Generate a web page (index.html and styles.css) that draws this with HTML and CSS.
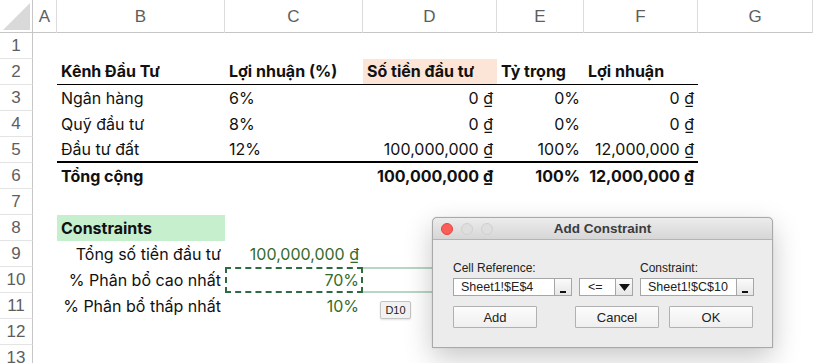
FILE: index.html
```html
<!DOCTYPE html>
<html lang="vi">
<head>
  <meta charset="UTF-8" />
  <title>Add Constraint</title>
  <link rel="stylesheet" href="styles.css">
</head>
<body>
  <div class="sheet">
    <div class="row head">
      <div class="corner">
        <svg width="33" height="33" viewBox="0 0 33 33"><polygon points="3,30 30,30 30,3" fill="#d9d9d9"/></svg>
      </div>
      <div class="col">A</div>
      <div class="col">B</div>
      <div class="col">C</div>
      <div class="col">D</div>
      <div class="col">E</div>
      <div class="col">F</div>
      <div class="col">G</div>
    </div>

    <div class="row"><div class="rn">1</div></div>

    <div class="row">
      <div class="rn">2</div><div></div>
      <div class="c b line">Kênh Đầu Tư</div>
      <div class="c b line">Lợi nhuận (%)</div>
      <div class="c b line peach">Số tiền đầu tư</div>
      <div class="c b line">Tỷ trọng</div>
      <div class="c b line">Lợi nhuận</div>
    </div>

    <div class="row">
      <div class="rn">3</div><div></div>
      <div class="c">Ngân hàng</div>
      <div class="c">6%</div>
      <div class="c r">0 ₫</div>
      <div class="c r">0%</div>
      <div class="c r">0 ₫</div>
    </div>

    <div class="row">
      <div class="rn">4</div><div></div>
      <div class="c">Quỹ đầu tư</div>
      <div class="c">8%</div>
      <div class="c r">0 ₫</div>
      <div class="c r">0%</div>
      <div class="c r">0 ₫</div>
    </div>

    <div class="row">
      <div class="rn">5</div><div></div>
      <div class="c thick">Đầu tư đất</div>
      <div class="c thick">12%</div>
      <div class="c r thick">100,000,000 ₫</div>
      <div class="c r thick">100%</div>
      <div class="c r thick">12,000,000 ₫</div>
    </div>

    <div class="row">
      <div class="rn">6</div><div></div>
      <div class="c b">Tổng cộng</div>
      <div class="c"></div>
      <div class="c b r">100,000,000 ₫</div>
      <div class="c b r">100%</div>
      <div class="c b r">12,000,000 ₫</div>
    </div>

    <div class="row"><div class="rn">7</div></div>

    <div class="row">
      <div class="rn">8</div><div></div>
      <div class="c b green-bg">Constraints</div>
    </div>

    <div class="row">
      <div class="rn">9</div><div></div>
      <div class="c r">Tổng số tiền đầu tư</div>
      <div class="c r val">100,000,000 ₫</div>
    </div>

    <div class="row">
      <div class="rn">10</div><div></div>
      <div class="c r">% Phân bổ cao nhất</div>
      <div class="c r val marching">70%</div>
      <div class="c picked"></div>
    </div>

    <div class="row">
      <div class="rn">11</div><div></div>
      <div class="c r">% Phân bổ thấp nhất</div>
      <div class="c r val">10%</div>
    </div>

    <div class="row"><div class="rn">12</div></div>
    <div class="row"><div class="rn">13</div></div>
  </div>

  <div class="tip">D10</div>

  <div class="dialog">
    <div class="titlebar">
      <div class="lights">
        <span class="light red"></span>
        <span class="light"></span>
        <span class="light"></span>
      </div>
      <div class="title">Add Constraint</div>
    </div>
    <div class="dlg-body">
      <div class="fields">
        <label>Cell Reference:</label>
        <span></span>
        <label>Constraint:</label>

        <div class="field">
          <span class="field-text">Sheet1!$E$4</span>
          <span class="pick"><i></i></span>
        </div>
        <div class="field select">
          <span class="field-text">&lt;=</span>
          <span class="arrow"><svg width="11" height="7" viewBox="0 0 11 7"><polygon points="0,0 11,0 5.5,7" fill="#111"/></svg></span>
        </div>
        <div class="field">
          <span class="field-text">Sheet1!$C$10</span>
          <span class="pick"><i></i></span>
        </div>
      </div>
      <div class="buttons">
        <button>Add</button>
        <button class="push">Cancel</button>
        <button>OK</button>
      </div>
    </div>
  </div>
</body>
</html>
```

FILE: styles.css
```css
* { box-sizing: border-box; }
body {
  margin: 0;
  background: #fff;
  color: #111;
  font-family: Inter, 'Noto Sans', sans-serif;
  font-size: 16px;
  overflow: hidden;
}
.sheet {
  width: 813px;
}
.row {
  display: grid;
  grid-template-columns: 33px 24px 168px 138px 134px 87px 114px 1fr;
  height: 26px;
}
.row.head {
  height: 33px;
  border-bottom: 1px solid #c6c6c6;
}
.corner {
  border-right: 1px solid #c6c6c6;
}
.corner svg { display: block; }
.col {
  display: flex;
  align-items: center;
  justify-content: center;
  border-right: 1px solid #dcdcdc;
  color: #5e5e5e;
  font-family: 'Liberation Sans', Arial, sans-serif;
  font-size: 17px;
}
.rn {
  display: flex;
  align-items: center;
  justify-content: center;
  border-right: 1px solid #c6c6c6;
  border-bottom: 1px solid #e4e4e4;
  color: #5e5e5e;
  font-family: 'Liberation Sans', Arial, sans-serif;
  font-size: 17px;
}
.c {
  padding: 0 4px 0 4px;
  line-height: 26px;
  white-space: nowrap;
  overflow: visible;
}
.c.b { font-weight: 700; }
.c.r { text-align: right; }
.line { border-bottom: 1px solid #000; line-height: 25px; }
.thick { border-bottom: 2px solid #000; line-height: 24px; }
.peach { background: #fce4d6; }
.green-bg { background: #c6efce; }
.val { color: #356b2a; }
.marching {
  border: 2px dashed #2e6b40;
  line-height: 22px;
  padding-right: 2px;
}
.picked {
  border-top: 2px solid #b9d5c5;
  border-bottom: 2px solid #b9d5c5;
}
.tip {
  position: absolute;
  left: 380px;
  top: 301px;
  width: 31px;
  height: 18px;
  background: #f2f2f2;
  border: 1px solid #c4c4c4;
  border-radius: 2px;
  box-shadow: 0 1px 2px rgba(0,0,0,0.12);
  font-family: 'Liberation Sans', Arial, sans-serif;
  font-size: 11px;
  line-height: 16px;
  text-align: center;
  color: #222;
}

/* dialog */
.dialog {
  position: absolute;
  left: 432px;
  top: 217px;
  width: 341px;
  height: 131px;
  background: #ececec;
  border: 1px solid #a9a9a9;
  border-radius: 5px 5px 0 0;
  box-shadow: 0 10px 28px rgba(0,0,0,0.22), 0 0 1px rgba(0,0,0,0.3);
  font-family: 'Liberation Sans', Arial, sans-serif;
  color: #222;
}
.titlebar {
  height: 22px;
  background: linear-gradient(#ececec, #d6d6d6);
  border-bottom: 1px solid #b4b4b4;
  border-radius: 5px 5px 0 0;
  position: relative;
  display: flex;
  align-items: center;
  justify-content: center;
}
.lights {
  position: absolute;
  left: 8px;
  top: 5px;
  display: flex;
  gap: 8px;
}
.light {
  width: 12px;
  height: 12px;
  border-radius: 50%;
  background: #dedede;
  border: 1px solid #d0d0d0;
}
.light.red {
  background: #fc5d57;
  border-color: #df4742;
}
.title {
  font-size: 13.5px;
  font-weight: 700;
  color: #3b3b3b;
}
.dlg-body {
  padding: 21px 19px 0 20px;
}
.fields {
  display: grid;
  grid-template-columns: 119px 54px 114px;
  column-gap: 7px;
  row-gap: 3px;
}
.fields label {
  font-size: 12px;
  line-height: 14px;
  color: #222;
}
.field {
  height: 18px;
  background: #fff;
  border: 1px solid #a6a6a6;
  display: flex;
  font-size: 12.5px;
}
.field-text {
  flex: 1;
  padding-left: 7px;
  line-height: 16px;
  white-space: nowrap;
  overflow: hidden;
}
.select .field-text { padding-left: 8px; }
.pick, .arrow {
  flex: 0 0 17px;
  border-left: 1px solid #a6a6a6;
  background: linear-gradient(#fbfbfb, #e6e6e6);
  position: relative;
}
.pick i {
  position: absolute;
  left: 5px;
  bottom: 2px;
  width: 6px;
  height: 2px;
  background: #111;
}
.arrow {
  display: flex;
  align-items: center;
  justify-content: center;
}
.arrow svg { display: block; }
.buttons {
  display: flex;
  gap: 10px;
  margin-top: 10px;
}
.buttons button {
  width: 84px;
  height: 22px;
  margin: 0;
  padding: 0;
  background: linear-gradient(#fcfcfc, #efefef);
  border: 1px solid #b1b1b1;
  border-radius: 1px;
  font-family: 'Liberation Sans', Arial, sans-serif;
  font-size: 13px;
  color: #222;
}
.buttons .push { margin-left: auto; }
```
